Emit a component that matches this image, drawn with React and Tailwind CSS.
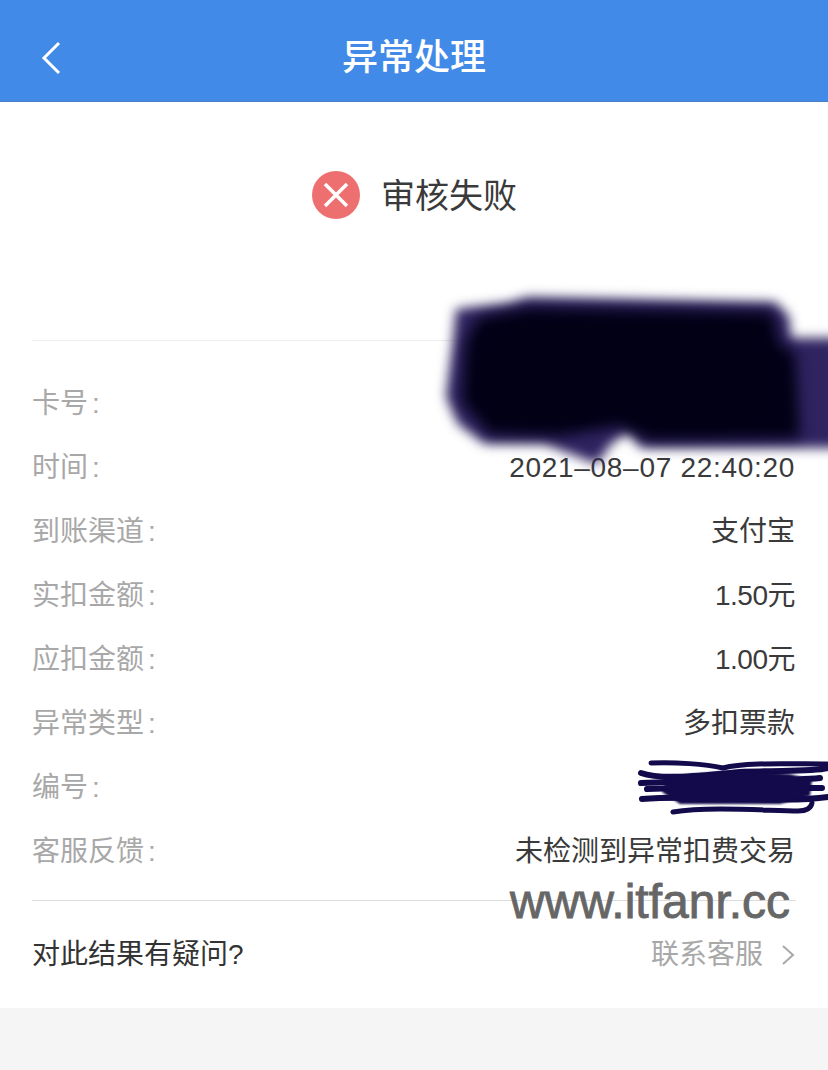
import React from "react";

const rows = [
  { label: "卡号", value: "" },
  { label: "时间", value: "2021–08–07 22:40:20", extra: "tracking-[0.7px]" },
  { label: "到账渠道", value: "支付宝" },
  { label: "实扣金额", value: "1.50元", extra: "tracking-[-0.5px]" },
  { label: "应扣金额", value: "1.00元", extra: "tracking-[-0.5px]" },
  { label: "异常类型", value: "多扣票款" },
  { label: "编号", value: "" },
  { label: "客服反馈", value: "未检测到异常扣费交易" },
];

const fontStack = "font-['Liberation_Sans','Noto_Sans_CJK_SC',sans-serif]";

const Scribbles = () => (
  <svg className="absolute left-0 top-0 pointer-events-none" width="828" height="1070" viewBox="0 0 828 1070">
    <g className="blur-[6px]">
      <path
        d="M456 309 L508 303 L528 297 L775 302 L789 316 L791 338 L840 338 L840 448 L641 448 L628 432 L611 444 L597 464 L545 444 L485 444 L458 424 L446 397 L453 341 Z"
        fill="#2f2360"
      />
    </g>
    <g className="blur-[7px]">
      <path
        d="M478 318 L528 308 L772 312 L780 345 L795 352 L800 438 L650 440 L620 426 L560 436 L490 434 L462 402 L466 342 Z"
        fill="#010015"
      />
    </g>
    <g fill="none" stroke="#120a4a" strokeLinecap="round" className="blur-[0.5px]">
      <path d="M651 763 C675 762 705 764 723 768 C745 762 790 764 827 764" strokeWidth="5" />
      <path d="M641 773 C660 780 700 776 740 772 C780 770 810 772 828 768" strokeWidth="6" />
      <path d="M641 783 C700 780 780 782 820 778" strokeWidth="6" />
      <path d="M647 789 C700 786 780 788 822 788" strokeWidth="6" />
      <path d="M642 799 C700 794 780 804 828 797" strokeWidth="6" />
      <path d="M673 812 C710 806 770 811 798 811 C806 811 811 808 812 803" strokeWidth="5" />
    </g>
    <path d="M668 776 L745 770 L790 774 L812 780 L810 796 L780 804 L680 804 L662 792 Z" fill="#120a4a" className="blur-[1px]" />
  </svg>
);

const App = () => {
  return (
    <div className={`relative w-[828px] h-[1070px] overflow-hidden bg-[#f5f5f5] ${fontStack}`}>
      <header className="relative flex items-center justify-center h-[102px] bg-[#418ae8] border-b border-[#4a7fc4]">
        <svg className="absolute left-[40px] top-[40px]" width="24" height="36" viewBox="0 0 24 36" fill="none">
          <path d="M19 3 L4 18 L19 33" stroke="#fff" strokeWidth="3" />
        </svg>
        <h1 className="mt-[15px] text-[36px] font-medium text-white">异常处理</h1>
      </header>

      <div className="bg-white h-[906px]">
        <div className="flex items-center justify-center gap-[21px] h-[186px] pl-px mb-[52px]">
          <svg width="48" height="48" viewBox="0 0 48 48">
            <circle cx="24" cy="24" r="24" fill="#ee6f6f" />
            <path d="M13 13 L35 35 M35 13 L13 35" stroke="#fff" strokeWidth="3.5" />
          </svg>
          <span className="pt-[2px] text-[34px] text-[#3a3a3a]">审核失败</span>
        </div>

        <div className="mx-8 border-t border-[#eeeeee]">
          <div className="pt-[31px] pb-[16px] border-b border-[#dddddd]">
            {rows.map((row) => (
              <div key={row.label} className="flex items-center justify-between h-[64px] pr-px">
                <span className="text-[28px] text-[#a8a8a8]">
                  {row.label}
                  <span className="ml-[4px]">:</span>
                </span>
                <span className={`text-[28px] text-[#3a3a3a] ${row.extra || ""}`}>{row.value}</span>
              </div>
            ))}
          </div>
          <div className="flex items-center justify-between h-[107px] pt-px pr-px">
            <span className="text-[28px] text-[#333]">对此结果有疑问?</span>
            <span className="flex items-center gap-[18px] text-[28px] text-[#a8a8a8]">
              联系客服
              <svg width="14" height="22" viewBox="0 0 14 22" fill="none">
                <path d="M2 2 L12 11 L2 20" stroke="#a8a8a8" strokeWidth="2" />
              </svg>
            </span>
          </div>
        </div>
      </div>

      <Scribbles />
      <span className="absolute left-[510px] top-[875px] text-[48px] leading-[54px] text-[#666] [-webkit-text-stroke:0.9px_#666]">
        www.itfanr.cc
      </span>
    </div>
  );
};

export default App;
